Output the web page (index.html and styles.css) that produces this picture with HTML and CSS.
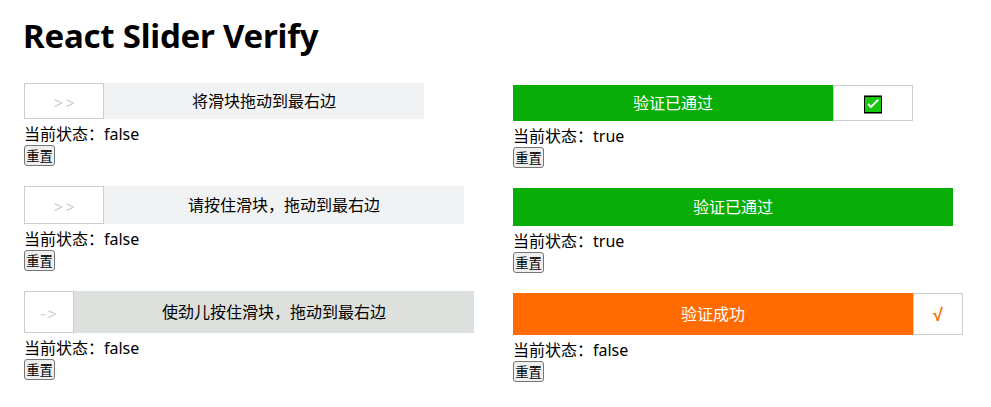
FILE: index.html
```html
<!DOCTYPE html>
<html lang="zh-CN">
<head>
<meta charset="utf-8">
<title>React Slider Verify</title>
<link rel="stylesheet" href="styles.css">
</head>
<body>
<h1><span>React Slider Verify</span></h1>
<main class="columns">
  <section class="column">
    <div class="item small">
      <div class="slider"><div class="handle idle">&gt;&gt;</div><div class="track">将滑块拖动到最右边</div></div>
      <p class="status">当前状态：<span>false</span></p>
      <button>重置</button>
    </div>
    <div class="item medium">
      <div class="slider"><div class="handle idle">&gt;&gt;</div><div class="track">请按住滑块，拖动到最右边</div></div>
      <p class="status">当前状态：<span>false</span></p>
      <button>重置</button>
    </div>
    <div class="item large">
      <div class="slider"><div class="handle idle arrow">-&gt;</div><div class="track">使劲儿按住滑块，拖动到最右边</div></div>
      <p class="status">当前状态：<span>false</span></p>
      <button>重置</button>
    </div>
  </section>
  <section class="column passed">
    <div class="item small">
      <div class="slider"><div class="track">验证已通过</div><div class="handle">
        <svg class="check" width="18" height="19" viewBox="0 0 18 19">
          <path fill="#777" d="M0 0h18v19H0z"/>
          <path fill="#000" d="M0 1h18v17H0z"/>
          <path fill="#16c60c" d="M1 2h16v15H1z"/>
          <path fill="none" stroke="#fff" stroke-width="1.8" d="M4 9l3 3L14.3 4.6"/>
        </svg>
      </div></div>
      <p class="status">当前状态：<span>true</span></p>
      <button>重置</button>
    </div>
    <div class="item medium">
      <div class="slider"><div class="track">验证已通过</div></div>
      <p class="status">当前状态：<span>true</span></p>
      <button>重置</button>
    </div>
    <div class="item large">
      <div class="slider"><div class="track">验证成功</div><div class="handle root">√</div></div>
      <p class="status">当前状态：<span>false</span></p>
      <button>重置</button>
    </div>
  </section>
</main>
</body>
</html>
```
FILE: styles.css
```css
* { box-sizing: border-box; }
body {
  margin: 0;
  padding: 14px 24px 0;
  background: #fff;
  color: #000;
  font: 16px/21px "Noto Sans", "Noto Sans CJK SC", sans-serif;
}
h1 {
  margin: 0 0 26px -1px;
  font-size: 33px;
  line-height: 43px;
  font-weight: 700;
  letter-spacing: -0.22px;
}
.columns { display: grid; grid-template-columns: 489px 454px; }
.column { display: flex; flex-direction: column; gap: 20px; }
.passed { padding-top: 2px; }
.item { display: flex; flex-direction: column; align-items: flex-start; }
.slider { display: flex; margin-bottom: 5px; text-align: center; }
.small .slider { width: 400px; height: 36px; line-height: 36px; }
.medium .slider { width: 440px; height: 38px; line-height: 38px; }
.large .slider { width: 450px; height: 42px; line-height: 42px; }
.track { flex: 1; background: #f1f2f4; }
.large .track { background: #dce1dd; }
.passed .track { background: #08ad08; color: #fff; }
.passed .large .track { background: #ff6b00; }
.handle {
  display: flex;
  flex: none;
  align-items: center;
  justify-content: center;
  width: 80px;
  border: 1px solid #ccc;
  background: #fff;
  color: #ccc;
}
.idle {
  padding: 8px 0 0 3px;
  font-family: "Liberation Mono", monospace;
  font-size: 15px;
  line-height: 20px;
  letter-spacing: 2.8px;
}
.large .handle { width: 50px; }
.large .arrow { padding: 8px 3px 0 0; letter-spacing: 0; }
.large .root {
  color: #ff6b00;
  font-family: "Liberation Sans", sans-serif;
  font-size: 18px;
  font-weight: 700;
}
.large .root { padding-top: 1px; }
.check { margin-top: 3px; }
.status { margin: 0; height: 21px; }
button {
  width: 31px;
  height: 21px;
  padding: 0;
  border: 1px solid #767676;
  border-radius: 3px;
  background: #efefef;
  color: #000;
  font: 13.333px/19px "Noto Sans CJK SC", sans-serif;
}
```
